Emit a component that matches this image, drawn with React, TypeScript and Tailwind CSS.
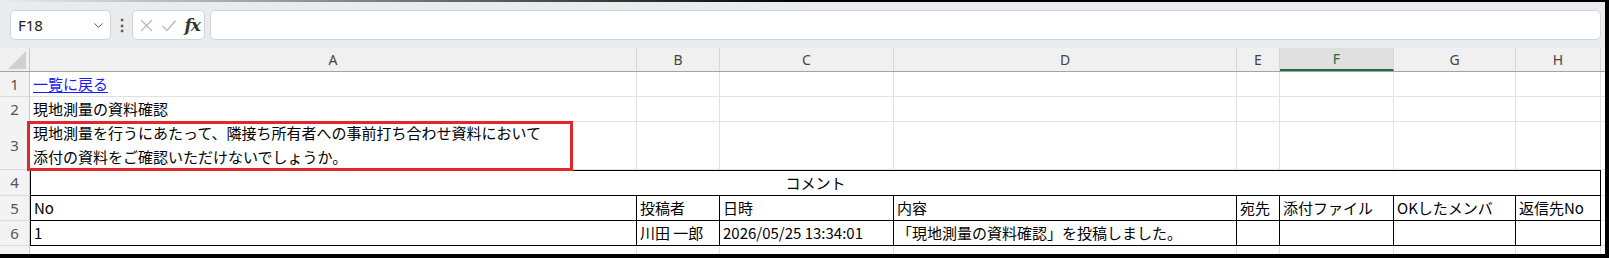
import { ChevronDown } from "lucide-react";

const cols = "grid grid-cols-[30px_607px_83px_174px_343px_43px_114px_122px_85px_1fr]";
const letters = ["A", "B", "C", "D", "E", "F", "G", "H"];
const jp = "font-['Noto_Sans_CJK_JP',sans-serif]";

function RowNum({ n }: { n: number }) {
    return (
        <div className="flex items-center justify-center bg-[#f3f3f3] border-r border-b border-r-[#c8c8c8] border-b-[#dcdcdc] text-[15px] text-[#555] font-['Noto_Sans',sans-serif]">
            {n}
        </div>
    );
}

function PlainRow({ n, h, children }: { n: number; h: string; children?: React.ReactNode }) {
    return (
        <div className={`${cols} ${h} relative`}>
            <RowNum n={n} />
            <div className={`flex flex-col justify-center px-[3px] border-r border-b border-[#e1e1e1] text-[15px] text-black leading-[24px] ${jp}`}>
                {children}
            </div>
            {letters.slice(1).map(l => (
                <div key={l} className="border-r border-b border-[#e1e1e1]" />
            ))}
            <div className="border-b border-[#e1e1e1]" />
        </div>
    );
}

function FormulaBar() {
    return (
        <div className="flex items-center h-[48px] pt-[2px] pl-[10px] pr-[4px] bg-[#e9ecef]">
            <div className="flex items-center justify-between w-[101px] h-[30px] bg-white border border-[#d2d4d7] rounded-[5px] pl-[7px] pr-[4px]">
                <span className="text-[15px] text-[#222] font-['Noto_Sans',sans-serif]">F18</span>
                <ChevronDown size={15} strokeWidth={1.6} className="text-[#555]" />
            </div>
            <div className="w-[21px] flex justify-center text-[#555] text-[16px] font-bold leading-none">⋮</div>
            <div className="flex items-center justify-between w-[73px] h-[30px] bg-white border border-[#d2d4d7] rounded-[5px] pl-[6px] pr-[4px]">
                <svg width="15" height="15" viewBox="0 0 15 15" className="text-[#b8b8b8]">
                    <path d="M2 2 L13 13 M13 2 L2 13" stroke="currentColor" strokeWidth="1.2" fill="none" />
                </svg>
                <svg width="16" height="15" viewBox="0 0 16 15" className="text-[#b8b8b8]">
                    <path d="M1.5 8 L6 12.5 L14.5 2.5" stroke="currentColor" strokeWidth="1.2" fill="none" />
                </svg>
                <span className="text-[17px] italic font-semibold text-[#333] leading-none font-['DejaVu_Serif',serif] tracking-[-1px]">fx</span>
            </div>
            <div className="flex-1 h-[30px] ml-[5px] bg-white border border-[#d2d4d7] rounded-[5px]" />
        </div>
    );
}

function ColumnHeader() {
    return (
        <div className={`${cols} h-[24px] bg-[#f0f0f0] border-b border-[#a3a3a3] font-['Noto_Sans',sans-serif] text-[14px] text-[#444]`}>
            <div className="relative border-r border-[#c8c8c8]">
                <svg width="18" height="18" viewBox="0 0 18 18" className="absolute right-[3px] bottom-[2px]">
                    <path d="M18 0 L18 18 L0 18 Z" fill="#d0d0d0" />
                </svg>
            </div>
            {letters.map(l => (
                <div
                    key={l}
                    className={`flex items-center justify-center border-r border-[#d6d6d6] ${
                        l === "F" ? "bg-[#e0e0e0] border-b-2 border-b-[#1e6e42] text-[#1e6e42]" : ""
                    }`}
                >
                    {l}
                </div>
            ))}
            <div />
        </div>
    );
}

function TableRow({ n, cells }: { n: number; cells: string[] }) {
    return (
        <div className={`${cols} h-[25px]`}>
            <RowNum n={n} />
            {cells.map((c, i) => (
                <div
                    key={i}
                    className={`flex items-center px-[3px] border-r border-b border-black text-[15px] text-black whitespace-nowrap overflow-hidden ${jp} ${
                        i === 0 ? "border-l" : ""
                    }`}
                >
                    {c}
                </div>
            ))}
            <div className="border-b border-[#e1e1e1]" />
        </div>
    );
}

export default function App() {
    return (
        <div className="relative w-[1609px] h-[258px] overflow-hidden bg-[#e9ecef] border-r-4 border-b-4 border-black">
            <div className="absolute top-0 left-0 right-0 h-[2px] bg-gradient-to-r from-transparent via-black to-black" />
            <FormulaBar />
            <ColumnHeader />
            <div className="bg-white">
                <PlainRow n={1} h="h-[25px]">
                    <a href="#" className="text-[#1a1aff] underline underline-offset-2">一覧に戻る</a>
                </PlainRow>
                <PlainRow n={2} h="h-[24px]">
                    <span>現地測量の資料確認</span>
                </PlainRow>
                <PlainRow n={3} h="h-[49px]">
                    <span>現地測量を行うにあたって、隣接ち所有者への事前打ち合わせ資料において</span>
                    <span>添付の資料をご確認いただけないでしょうか。</span>
                </PlainRow>
                <div className={`${cols} h-[26px] relative`}>
                    <div className="absolute left-[27px] top-[-49px] w-[546px] h-[50px] border-[3px] border-[#e3262b] pointer-events-none" />
                    <RowNum n={4} />
                    <div className={`col-span-8 flex items-center justify-center border border-black text-[15px] text-black ${jp}`}>
                        コメント
                    </div>
                    <div className="border-b border-[#e1e1e1]" />
                </div>
                <TableRow n={5} cells={["No", "投稿者", "日時", "内容", "宛先", "添付ファイル", "OKしたメンバ", "返信先No"]} />
                <TableRow n={6} cells={["1", "川田 一郎", "2026/05/25 13:34:01", "「現地測量の資料確認」を投稿しました。", "", "", "", ""]} />
                <div className={`${cols} h-[12px]`}>
                    <div className="flex justify-center bg-[#f3f3f3] border-r border-[#c8c8c8] text-[15px] leading-[24px] text-[#555] font-['Noto_Sans',sans-serif]">7</div>
                    {letters.map(l => (
                        <div key={l} className="border-r border-[#e1e1e1]" />
                    ))}
                    <div />
                </div>
            </div>
        </div>
    );
}
